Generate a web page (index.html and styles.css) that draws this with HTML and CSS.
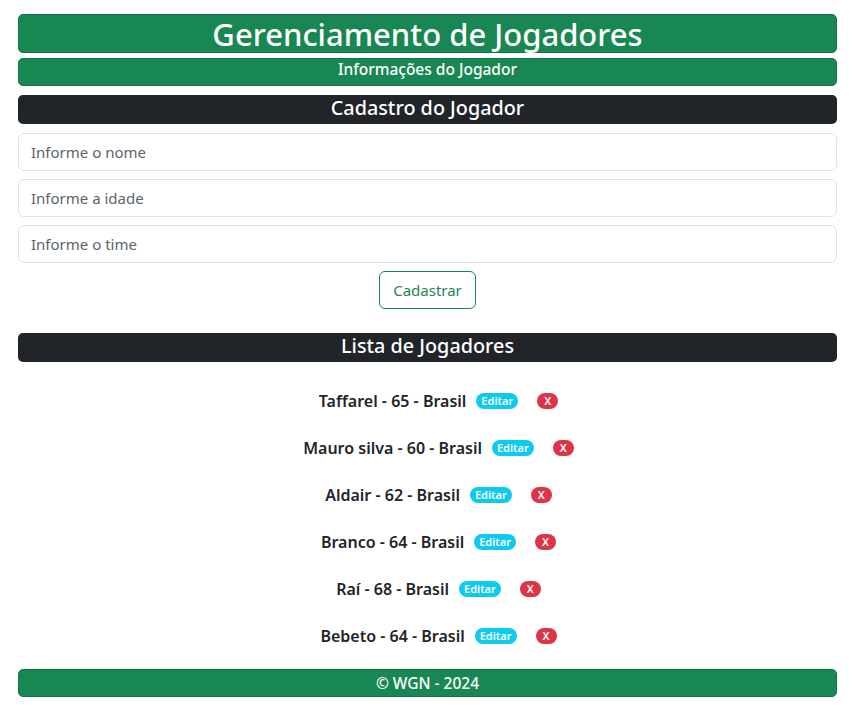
FILE: index.html
```html
<!DOCTYPE html>
<html lang="pt-BR">
<head>
<meta charset="utf-8">
<title>Gerenciamento de Jogadores</title>
<link rel="stylesheet" href="styles.css">
</head>
<body>
<div class="page">
  <header class="bar bar-green title">Gerenciamento de Jogadores</header>
  <div class="bar bar-green sub">Informações do Jogador</div>
  <div class="bar bar-dark section">Cadastro do Jogador</div>
  <form class="form">
    <input class="field" type="text" placeholder="Informe o nome">
    <input class="field" type="text" placeholder="Informe a idade">
    <input class="field" type="text" placeholder="Informe o time">
    <div class="actions"><button type="button" class="btn">Cadastrar</button></div>
  </form>
  <div class="bar bar-dark section list-title">Lista de Jogadores</div>
  <ul class="list">
    <li class="row"><span class="name">Taffarel - 65 - Brasil</span><span class="badge edit">Editar</span><span class="badge del">X</span></li>
    <li class="row"><span class="name">Mauro silva - 60 - Brasil</span><span class="badge edit">Editar</span><span class="badge del">X</span></li>
    <li class="row"><span class="name">Aldair - 62 - Brasil</span><span class="badge edit">Editar</span><span class="badge del">X</span></li>
    <li class="row"><span class="name">Branco - 64 - Brasil</span><span class="badge edit">Editar</span><span class="badge del">X</span></li>
    <li class="row"><span class="name">Raí - 68 - Brasil</span><span class="badge edit">Editar</span><span class="badge del">X</span></li>
    <li class="row"><span class="name">Bebeto - 64 - Brasil</span><span class="badge edit">Editar</span><span class="badge del">X</span></li>
  </ul>
  <footer class="bar bar-green foot">© WGN - 2024</footer>
</div>
</body>
</html>
```
FILE: styles.css
```css
* { box-sizing: border-box; }
body {
  margin: 0;
  font-family: "Noto Sans", "Open Sans", sans-serif;
  color: #212529;
  background: #fff;
}
.page {
  margin: 14px 26px 0 18px;
  display: flex;
  flex-direction: column;
}
.bar {
  color: #fff;
  text-align: center;
  border-radius: 5px;
}
.bar-green {
  background: #198754;
  border: 1px solid #157347;
}
.bar-dark {
  background: #212529;
}
.title {
  height: 39px;
  font-size: 31px;
  line-height: 38px;
  font-weight: 500;
}
.sub {
  margin-top: 5px;
  height: 28px;
  font-size: 15.5px;
  line-height: 20px;
  font-weight: 500;
}
.section {
  margin-top: 9px;
  height: 29px;
  font-size: 19.8px;
  line-height: 26px;
  font-weight: 500;
}
.form {
  margin-top: 9px;
  display: flex;
  flex-direction: column;
  gap: 8px;
}
.field {
  height: 38px;
  border: 1px solid #dee2e6;
  border-radius: 6px;
  padding: 0 12px;
  font-family: inherit;
  font-size: 15px;
  color: #212529;
  background: #fff;
  outline: none;
}
.field::placeholder { color: #5c636a; opacity: 1; }
.actions {
  display: flex;
  justify-content: center;
}
.btn {
  width: 97px;
  height: 38px;
  border: 1px solid #198754;
  border-radius: 6px;
  background: #fff;
  color: #198754;
  font-family: inherit;
  font-size: 15px;
  padding: 0;
}
.list-title {
  margin-top: 24px;
}
.list {
  list-style: none;
  margin: 27px 0 0;
  padding: 0;
  display: flex;
  flex-direction: column;
  gap: 23px;
}
.row {
  height: 24px;
  display: flex;
  justify-content: center;
  align-items: center;
}
.name {
  font-weight: 600;
  font-size: 16px;
  margin-left: 22px;
  margin-right: 10px;
}
.badge {
  display: inline-block;
  height: 16px;
  line-height: 16px;
  padding: 0 5px;
  border-radius: 8px;
  color: #fff;
  font-size: 11px;
  font-weight: 600;
}
.edit { background: #0dcaf0; }
.del { background: #dc3545; margin-left: 19px; padding: 0 7px; }
.foot {
  margin-top: 21px;
  height: 28px;
  font-size: 15.5px;
  line-height: 26px;
  font-weight: 500;
}
```
